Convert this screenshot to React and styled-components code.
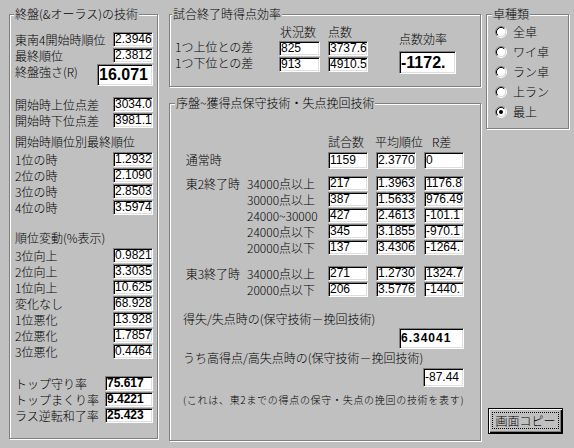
import React from 'react';
import styled, { createGlobalStyle } from 'styled-components';

const GlobalStyle = createGlobalStyle`
  html, body { margin: 0; padding: 0; background: #c0c0c0; }
  body {
    font-family: "Noto Sans CJK JP", "Liberation Sans", sans-serif;
    font-size: 12px;
    font-weight: 300;
    color: #000;
  }
`;

const Dialog = styled.div`
  width: 574px;
  height: 448px;
  box-sizing: border-box;
  background: #c0c0c0;
  display: flex;
  align-items: flex-start;
  padding: 14px 0 0 9px;
`;

const Group = styled.div`
  position: relative;
  box-sizing: border-box;
  width: ${(p) => p.$w}px;
  height: ${(p) => p.$h}px;
  border: 1px solid #808080;
  box-shadow: inset 1px 1px 0 #fff, 1px 1px 0 #fff;
`;

const GroupTitle = styled.span`
  position: absolute;
  top: -9px;
  left: ${(p) => p.$x}px;
  padding: 0 1px;
  background: #c0c0c0;
  line-height: 16px;
  white-space: nowrap;
`;

const Column = styled.div`
  display: flex;
  flex-direction: column;
  margin-left: ${(p) => p.$ml}px;
  width: ${(p) => p.$w}px;
  height: ${(p) => p.$h}px;
  gap: ${(p) => p.$gap || 0}px;
`;

const Field = styled.div`
  box-sizing: border-box;
  flex: none;
  width: ${(p) => p.$w}px;
  height: ${(p) => p.$h || 15}px;
  margin-top: ${(p) => p.$mt || 0}px;
  background: #fff;
  border-top: 1px solid #808080;
  border-left: 1px solid #808080;
  border-right: 1px solid #fff;
  border-bottom: 1px solid #fff;
  box-shadow: inset 1px 1px 0 #000, inset -1px -1px 0 #dfdfdf;
  padding-left: 1px;
  font-family: "Liberation Sans", Arial, sans-serif;
  font-size: ${(p) => p.$fs || 12}px;
  font-weight: ${(p) => (p.$bold ? 700 : 400)};
  letter-spacing: ${(p) => p.$ls || 0}px;
  line-height: ${(p) => (p.$h || 15) - 2}px;
  white-space: nowrap;
  overflow: hidden;
`;

/* ---------- left group ---------- */
const LeftBody = styled.div`
  display: flex;
  flex-direction: column;
  padding: 17px 4px 0 5px;
`;

const Row = styled.div`
  display: flex;
  align-items: flex-start;
  justify-content: space-between;
  height: ${(p) => p.$h || 16}px;
  margin-top: ${(p) => p.$mt || 0}px;
`;

const Label = styled.span`
  line-height: 15px;
  white-space: nowrap;
`;

const Caption = styled.div`
  line-height: 16px;
  margin-top: ${(p) => p.$mt || 0}px;
  margin-bottom: 2px;
  white-space: nowrap;
`;

/* ---------- top-middle group ---------- */
const EffBody = styled.div`
  display: flex;
  padding: 9px 0 0 5px;
`;

const EffCol = styled.div`
  display: flex;
  flex-direction: column;
  width: ${(p) => p.$w}px;
  padding-top: ${(p) => p.$pt || 0}px;
`;

const Head = styled.div`
  line-height: 16px;
  white-space: nowrap;
  padding-left: ${(p) => p.$pl || 0}px;
`;

const EffLabel = styled.div`
  line-height: 16px;
  white-space: nowrap;
`;

/* ---------- lower-middle group ---------- */
const TechBody = styled.div`
  display: flex;
  flex-direction: column;
  width: 281px;
  padding: 30px 0 0 13px;
`;

const TechRow = styled.div`
  display: flex;
  align-items: flex-start;
  height: ${(p) => p.$h || 16}px;
  margin-top: ${(p) => p.$mt || 0}px;
`;

const LabelA = styled.span`
  width: 64px;
  flex: none;
  line-height: 15px;
  white-space: nowrap;
`;

const LabelB = styled.span`
  width: 81px;
  flex: none;
  line-height: 15px;
  white-space: nowrap;
`;

const Cells = styled.div`
  display: flex;
  gap: 8px;
`;

const HeadCell = styled.span`
  width: ${(p) => p.$w}px;
  padding-left: ${(p) => p.$pl || 0}px;
  margin-left: ${(p) => p.$ml || 0}px;
  box-sizing: border-box;
  line-height: 16px;
  white-space: nowrap;
`;

const Note = styled.div`
  line-height: 16px;
  margin-top: ${(p) => p.$mt || 0}px;
  white-space: nowrap;
  font-size: ${(p) => p.$fs || 12}px;
  letter-spacing: ${(p) => p.$ls || 0}px;
`;

const RightAlign = styled.div`
  display: flex;
  justify-content: flex-end;
  margin-top: ${(p) => p.$mt || 0}px;
`;

/* ---------- right group ---------- */
const RadioList = styled.div`
  display: flex;
  flex-direction: column;
  padding: 7px 0 0 8px;
`;

const RadioRow = styled.label`
  display: flex;
  align-items: center;
  gap: 6px;
  height: 20px;
  line-height: 16px;
  white-space: nowrap;
`;

const Button = styled.button`
  box-sizing: border-box;
  width: 75px;
  height: 26px;
  margin: auto 0 0 2px;
  padding: 3px 3px 4px 3px;
  display: flex;
  background: #c0c0c0;
  border: 1px solid #000;
  box-shadow: inset 1px 1px 0 #fff, inset -1px -1px 0 #000, inset -2px -2px 0 #808080;
  font-family: "Noto Sans CJK JP", "Liberation Sans", sans-serif;
  font-size: 12px;
  font-weight: 300;
  color: #000;
`;

const Focus = styled.span`
  flex: 1;
  display: flex;
  align-items: center;
  justify-content: center;
  border: 1px dotted #000;
  line-height: 14px;
`;

function Radio({ checked }) {
  return (
    <svg width="12" height="12" viewBox="0 0 12 12" style={{ flex: 'none' }}>
      <circle cx="6" cy="6" r="4.5" fill="#fff" />
      <path d="M2.11 9.89 A5.5 5.5 0 0 1 9.89 2.11" fill="none" stroke="#808080" />
      <path d="M9.89 2.11 A5.5 5.5 0 0 1 2.11 9.89" fill="none" stroke="#fff" />
      <path d="M2.82 9.18 A4.5 4.5 0 0 1 9.18 2.82" fill="none" stroke="#000" />
      <path d="M9.18 2.82 A4.5 4.5 0 0 1 2.82 9.18" fill="none" stroke="#dfdfdf" />
      {checked && <circle cx="6" cy="6" r="2" fill="#000" />}
    </svg>
  );
}

const rankRows = [
  ['1位の時', '1.2932'],
  ['2位の時', '2.1090'],
  ['3位の時', '2.8503'],
  ['4位の時', '3.5974'],
];

const moveRows = [
  ['3位向上', '0.9821'],
  ['2位向上', '3.3035'],
  ['1位向上', '10.625'],
  ['変化なし', '68.928'],
  ['1位悪化', '13.928'],
  ['2位悪化', '1.7857'],
  ['3位悪化', '0.4464'],
];

const topRows = [
  ['トップ守り率', '75.617'],
  ['トップまくり率', '9.4221'],
  ['ラス逆転和了率', '25.423'],
];

const east2 = [
  ['34000点以上', '217', '1.3963', '1176.8'],
  ['30000点以上', '387', '1.5633', '976.49'],
  ['24000~30000', '427', '2.4613', '-101.1'],
  ['24000点以下', '345', '3.1855', '-970.1'],
  ['20000点以下', '137', '3.4306', '-1264.'],
];

const east3 = [
  ['34000点以上', '271', '1.2730', '1324.7'],
  ['20000点以下', '206', '3.5776', '-1440.'],
];

const tables = ['全卓', 'ワイ卓', 'ラン卓', '上ラン', '最上'];

export default function App() {
  return (
    <>
      <GlobalStyle />
      <Dialog>
        <Group $w={149} $h={425}>
          <GroupTitle $x={4}>終盤(&amp;オーラス)の技術</GroupTitle>
          <LeftBody>
            <Row>
              <Label>東南4開始時順位</Label>
              <Field $w={40}>2.3946</Field>
            </Row>
            <Row>
              <Label>最終順位</Label>
              <Field $w={40}>2.3812</Field>
            </Row>
            <Row $h={22}>
              <Label>終盤強さ(R)</Label>
              <Field $w={56} $h={22} $fs={16} $bold>16.071</Field>
            </Row>
            <Row $mt={11}>
              <Label>開始時上位点差</Label>
              <Field $w={40}>3034.0</Field>
            </Row>
            <Row>
              <Label>開始時下位点差</Label>
              <Field $w={40}>3981.1</Field>
            </Row>
            <Caption $mt={5}>開始時順位別最終順位</Caption>
            {rankRows.map(([l, v]) => (
              <Row key={l}>
                <Label>{l}</Label>
                <Field $w={40}>{v}</Field>
              </Row>
            ))}
            <Caption $mt={14}>順位変動(%表示)</Caption>
            {moveRows.map(([l, v]) => (
              <Row key={l}>
                <Label>{l}</Label>
                <Field $w={40}>{v}</Field>
              </Row>
            ))}
            {topRows.map(([l, v], i) => (
              <Row key={l} $mt={i === 0 ? 16 : 0}>
                <Label>{l}</Label>
                <Field $w={48} $bold>{v}</Field>
              </Row>
            ))}
          </LeftBody>
        </Group>

        <Column $ml={11} $w={312} $gap={16}>
          <Group $w={312} $h={73}>
            <GroupTitle $x={2}>試合終了時得点効率</GroupTitle>
            <EffBody>
              <EffCol $w={104} $pt={15}>
                <EffLabel>1つ上位との差</EffLabel>
                <EffLabel>1つ下位との差</EffLabel>
              </EffCol>
              <EffCol $w={49}>
                <Head $pl={1}>状況数</Head>
                <Field $w={41} $mt={1}>825</Field>
                <Field $w={41} $mt={1}>913</Field>
              </EffCol>
              <EffCol $w={71}>
                <Head>点数</Head>
                <Field $w={40} $mt={1}>3737.6</Field>
                <Field $w={40} $mt={1}>4910.5</Field>
              </EffCol>
              <EffCol $w={60} $pt={7}>
                <Head>点数効率</Head>
                <Field $w={57} $h={23} $mt={4} $fs={16} $bold>-1172.</Field>
              </EffCol>
            </EffBody>
          </Group>

          <Group $w={312} $h={338}>
            <GroupTitle $x={5}>序盤~獲得点保守技術・失点挽回技術</GroupTitle>
            <TechBody>
              <TechRow>
                <LabelA />
                <LabelB />
                <HeadCell $w={48}>試合数</HeadCell>
                <HeadCell $w={48} $ml={-1}>平均順位</HeadCell>
                <HeadCell $w={40} $pl={9}>R差</HeadCell>
              </TechRow>
              <TechRow $mt={2} $h={17}>
                <LabelA>&nbsp;通常時</LabelA>
                <LabelB />
                <Cells>
                  <Field $w={40} $h={17}>1159</Field>
                  <Field $w={40} $h={17}>2.3770</Field>
                  <Field $w={40} $h={17}>0</Field>
                </Cells>
              </TechRow>
              {east2.map(([sub, a, b, c], i) => (
                <TechRow key={sub + i} $mt={i === 0 ? 7 : 0}>
                  <LabelA>{i === 0 ? '\u00a0東2終了時' : ''}</LabelA>
                  <LabelB>{sub}</LabelB>
                  <Cells>
                    <Field $w={40}>{a}</Field>
                    <Field $w={40}>{b}</Field>
                    <Field $w={40}>{c}</Field>
                  </Cells>
                </TechRow>
              ))}
              {east3.map(([sub, a, b, c], i) => (
                <TechRow key={'e3' + i} $mt={i === 0 ? 10 : 0}>
                  <LabelA>{i === 0 ? '\u00a0東3終了時' : ''}</LabelA>
                  <LabelB>{sub}</LabelB>
                  <Cells>
                    <Field $w={40}>{a}</Field>
                    <Field $w={40}>{b}</Field>
                    <Field $w={40}>{c}</Field>
                  </Cells>
                </TechRow>
              ))}
              <Note $mt={13}>得失/失点時の(保守技術－挽回技術)</Note>
              <RightAlign $mt={1}>
                <Field $w={65} $h={21} $bold $ls={1}>6.34041</Field>
              </RightAlign>
              <Note $mt={1}>うち高得点/高失点時の(保守技術－挽回技術)</Note>
              <RightAlign $mt={2}>
                <Field $w={41} $h={19}>-87.44</Field>
              </RightAlign>
              <Note $mt={5} $fs={10} $ls={0.7}>(これは、東2までの得点の保守・失点の挽回の技術を表す)</Note>
            </TechBody>
          </Group>
        </Column>

        <Column $ml={5} $w={83} $h={420}>
          <Group $w={83} $h={115}>
            <GroupTitle $x={5}>卓種類</GroupTitle>
            <RadioList>
              {tables.map((t) => (
                <RadioRow key={t}>
                  <Radio checked={t === '最上'} />
                  {t}
                </RadioRow>
              ))}
            </RadioList>
          </Group>
          <Button>
            <Focus>画面コピー</Focus>
          </Button>
        </Column>
      </Dialog>
    </>
  );
}
